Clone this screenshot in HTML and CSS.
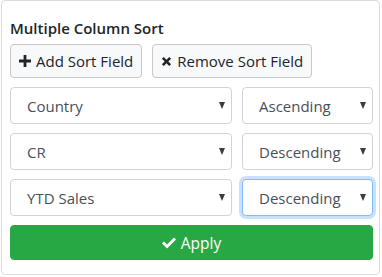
FILE: index.html
```html
<!DOCTYPE html>
<html lang="en">
<head>
  <meta charset="UTF-8" />
  <title>Multiple Column Sort</title>
  <link rel="stylesheet" href="styles.css">
</head>
<body>

  <div class="sort-panel">
    <h4 class="sort-title">Multiple Column Sort</h4>

    <div class="sort-actions">
      <button class="btn-light">
        <svg class="icon" viewBox="0 0 12 12"><path d="M4.6 0h2.8v4.6H12v2.8H7.4V12H4.6V7.4H0V4.6h4.6z" fill="#212529"/></svg>
        Add Sort Field
      </button>
      <button class="btn-light">
        <svg class="icon icon-x" viewBox="0 0 12 12"><path d="M1 3l2-2 3 3 3-3 2 2-3 3 3 3-2 2-3-3-3 3-2-2 3-3z" fill="#212529"/></svg>
        Remove Sort Field
      </button>
    </div>

    <div class="sort-row">
      <div class="select-wrap">
        <select class="form-select">
          <option>Country</option>
        </select>
      </div>
      <div class="select-wrap">
        <select class="form-select">
          <option>Ascending</option>
        </select>
      </div>
    </div>

    <div class="sort-row">
      <div class="select-wrap">
        <select class="form-select">
          <option>CR</option>
        </select>
      </div>
      <div class="select-wrap">
        <select class="form-select">
          <option>Descending</option>
        </select>
      </div>
    </div>

    <div class="sort-row">
      <div class="select-wrap">
        <select class="form-select">
          <option>YTD Sales</option>
        </select>
      </div>
      <div class="select-wrap">
        <select class="form-select focused">
          <option>Descending</option>
        </select>
      </div>
    </div>

    <button class="btn-apply">
      <svg class="icon-check" viewBox="0 0 16 13"><path d="M0 7l2.3-2.3 3.5 3.5L13.7 0.3 16 2.6 5.8 12.8z" fill="#fff"/></svg>
      Apply
    </button>
  </div>

</body>
</html>
```

FILE: styles.css
```css
body {
  margin: 0;
  background-color: #ffffff;
  font-family: "Open Sans", "Noto Sans", sans-serif;
  color: #212529;
}

.sort-panel {
  width: 363px;
  height: 273px;
  margin-left: 1px;
  padding: 0 6px 0 8px;
  border: 1px solid #dcdcdc;
  border-radius: 4px;
  background-color: #ffffff;
  display: flex;
  flex-direction: column;
  gap: 9px;
}

.sort-title {
  margin: 0;
  padding-top: 17px;
  font-size: 15px;
  font-weight: 600;
  line-height: 20px;
  color: #212529;
}

.sort-actions {
  display: flex;
  gap: 10px;
  margin-top: -3px;
}

.btn-light {
  height: 34px;
  padding: 0 8px;
  display: flex;
  align-items: center;
  gap: 5px;
  font-family: inherit;
  font-size: 15px;
  color: #212529;
  background-color: #f8f9fa;
  border: 1px solid #c8c8c8;
  border-radius: 4px;
}

.icon {
  width: 12px;
  height: 12px;
}

.icon-x {
  width: 11px;
  height: 11px;
}

.sort-row {
  display: grid;
  grid-template-columns: 1fr 131px;
  gap: 10px;
}

.select-wrap {
  position: relative;
}

.select-wrap::after {
  content: "";
  position: absolute;
  right: 7px;
  top: 15px;
  border-left: 3.5px solid transparent;
  border-right: 3.5px solid transparent;
  border-top: 7px solid #3c3c3c;
  pointer-events: none;
}

.form-select {
  width: 100%;
  height: 37px;
  padding: 0 24px 0 16px;
  appearance: none;
  -webkit-appearance: none;
  font-family: inherit;
  font-size: 15px;
  color: #495057;
  background-color: #ffffff;
  border: 1px solid #ced4da;
  border-radius: 4px;
}

.focused {
  border-color: #80bdff;
  box-shadow: 0 0 0 3px rgba(0, 123, 255, 0.22);
}

.btn-apply {
  height: 35px;
  display: flex;
  align-items: center;
  justify-content: center;
  gap: 5px;
  font-family: inherit;
  font-size: 15.5px;
  color: #ffffff;
  background-color: #28a745;
  border: 1px solid #28a745;
  border-radius: 4px;
}

.icon-check {
  width: 14px;
  height: 12px;
}
```
